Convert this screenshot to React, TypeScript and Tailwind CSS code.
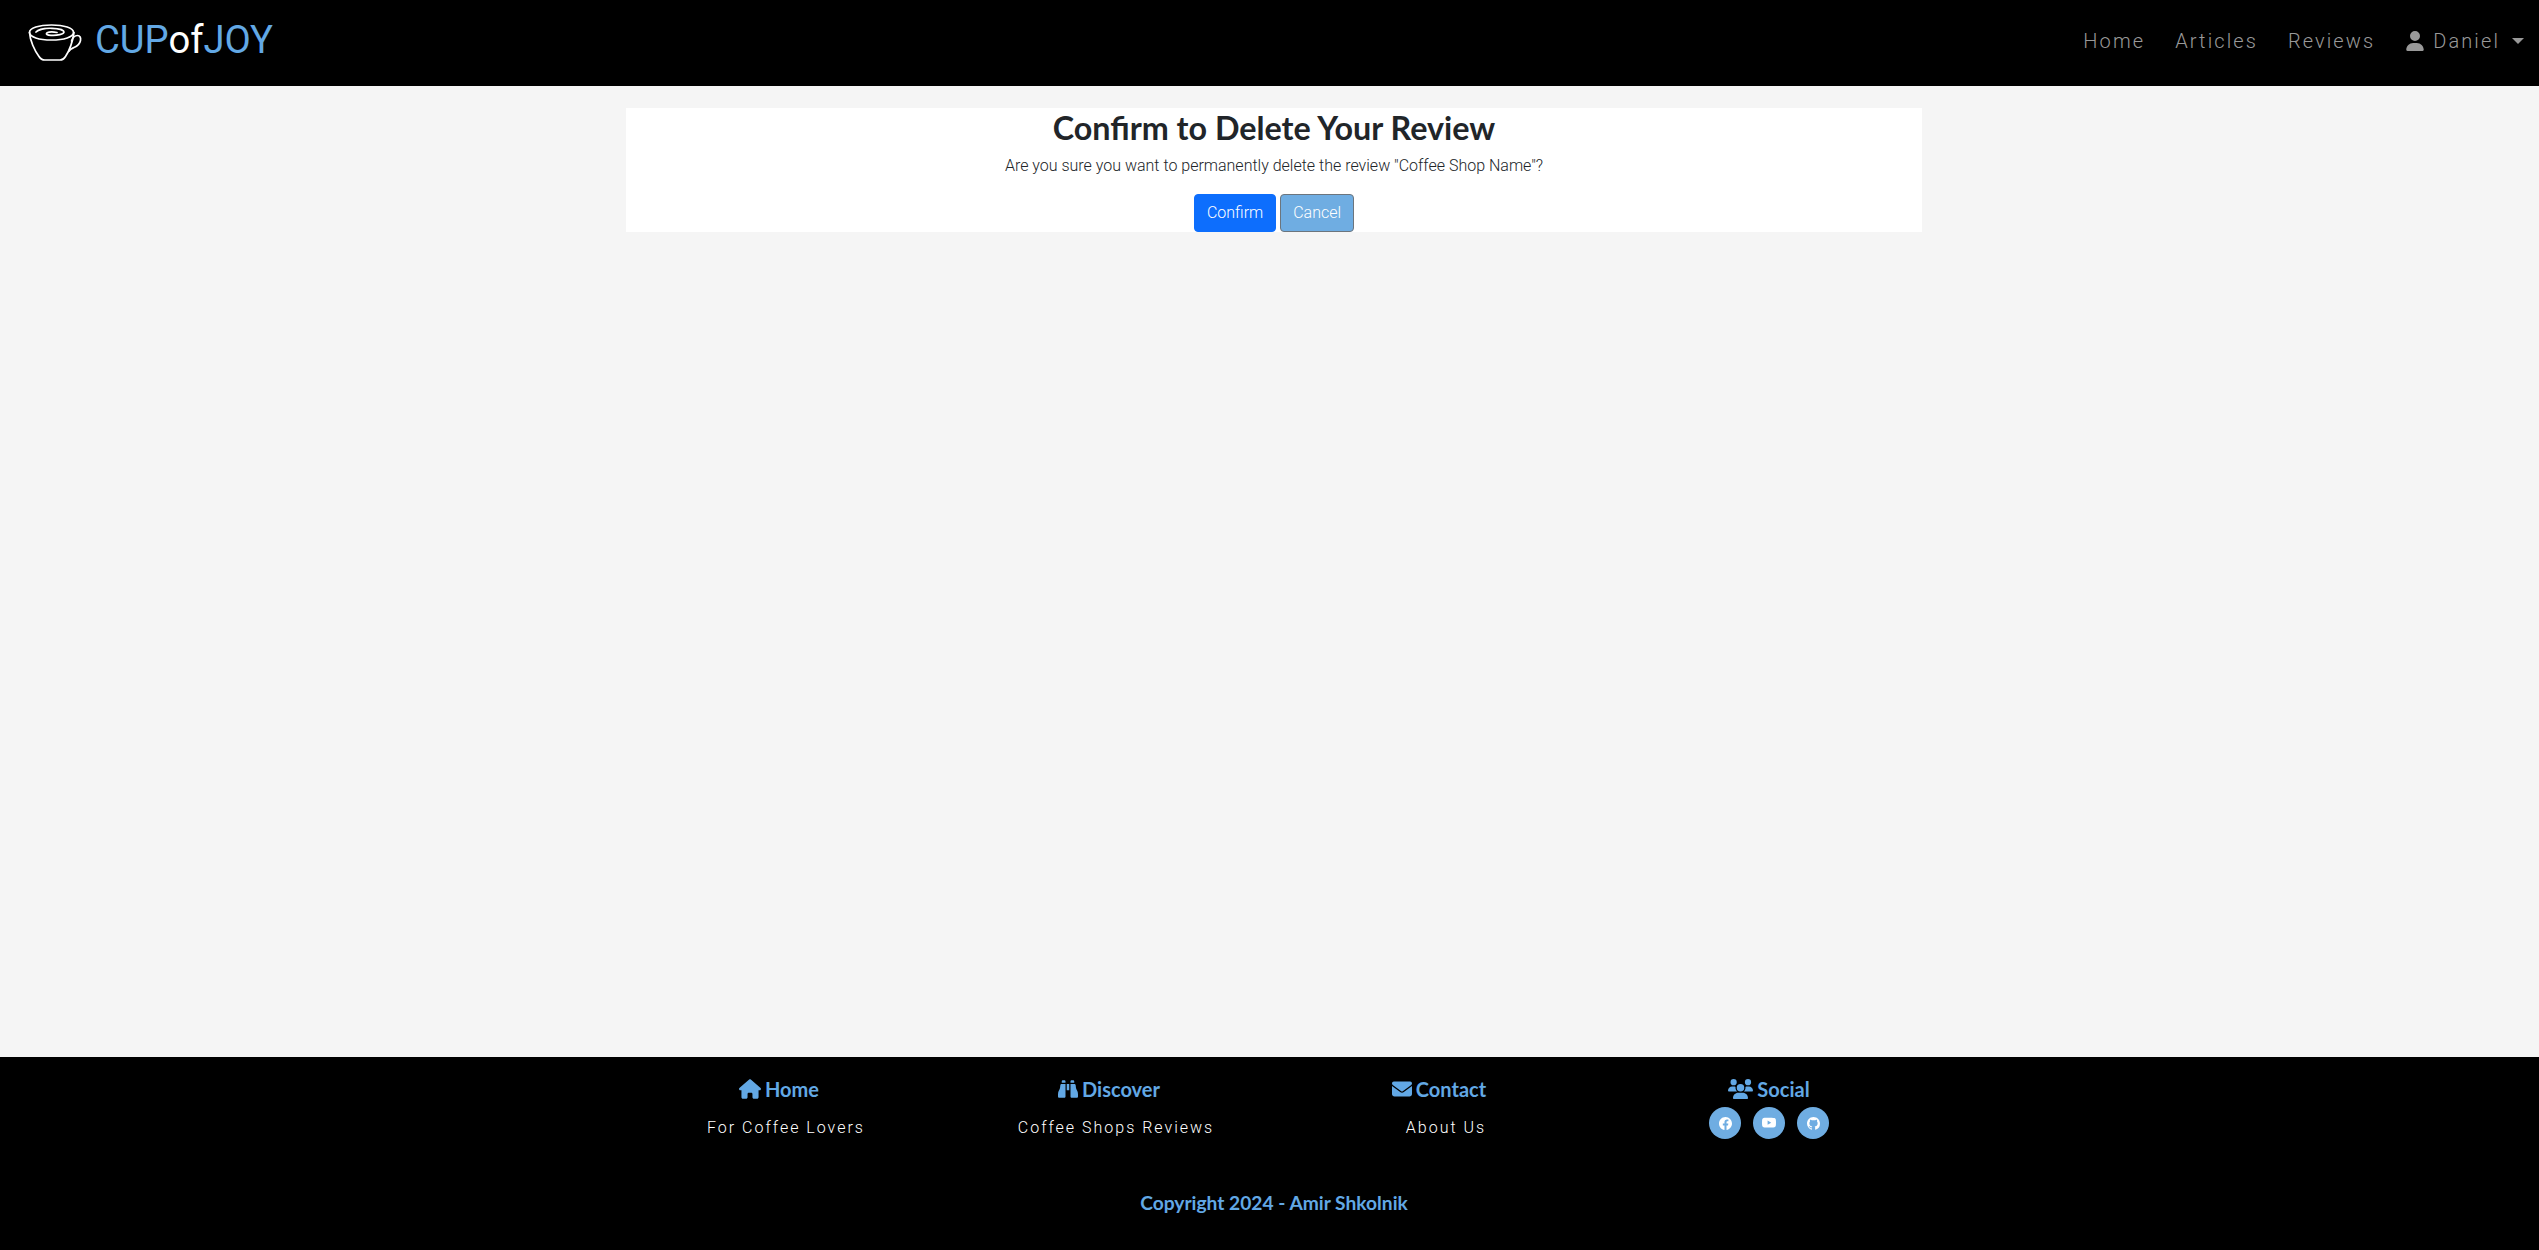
import { FaBinoculars, FaEnvelope, FaHouse, FaUser, FaUsers } from 'react-icons/fa6';
import { BsFacebook, BsGithub, BsYoutube } from 'react-icons/bs';

const roboto = 'font-["Roboto",sans-serif]';
const lato = 'font-["Lato",sans-serif]';

function CupLogo() {
  return (
    <svg viewBox="0 0 54 38" className="h-[38px] w-[54px]" fill="none" stroke="white" strokeWidth="1.7" strokeLinecap="round" strokeLinejoin="round">
      <path d="M1.500 8.500C1.500 4 11 1 23.500 1S45.500 4 45.500 8.500 36 16 23.500 16 1.500 13 1.500 8.500Z" />
      <path d="M1.500 8.500c.5 8 5 18 9.500 24 1.500 2.500 3.500 3.500 6 3.500h15c2.500 0 4-1 5.500-3.500 4-6 7-14 8.500-24" />
      <path d="M8 8c2-2.500 9-4 16-3.700 6 .2 12 1.500 12 3.700s-7 3.700-13 3.300c-4-.2-5.500-1.300-4-2.500 2-1 7-1 10-.3" />
      <path d="M43.500 17c1-3 3-5.500 6-5.500 2.500 0 3.500 2.300 3 5-.7 3.500-4 6-6.500 7-2 .8-4 1.500-5 3.500" />
    </svg>
  );
}

function NavLink({ label }: { label: string }) {
  return <a className="text-[20px] font-light tracking-[2.1px] text-[#999999]">{label}</a>;
}

function Navbar() {
  return (
    <nav className={`flex h-[86px] items-center justify-between bg-black pl-[28px] pr-[15px] ${roboto}`}>
      <div className="flex items-center">
        <CupLogo />
        <span className="mb-[6px] ml-[13px] text-[38.2px] font-normal leading-none text-[#62a8e5]">
          CUP<span className="text-white">of</span>JOY
        </span>
      </div>
      <div className="flex items-center gap-[30px] pb-[5px]">
        <NavLink label="Home" />
        <NavLink label="Articles" />
        <NavLink label="Reviews" />
        <div className="flex items-center gap-[8px] text-[#999999]">
          <FaUser className="h-[20px] w-[20px]" />
          <span className="text-[20px] font-light tracking-[2.1px]">Daniel</span>
          <span className="ml-[4px] h-0 w-0 border-x-[6px] border-t-[6px] border-x-transparent border-t-[#999999]" />
        </div>
      </div>
    </nav>
  );
}

function DeleteCard() {
  return (
    <main className="flex flex-1 justify-center bg-[#f5f5f5] pl-[9px] pt-[22px]">
      <section className="flex h-[124px] w-[1296px] flex-col items-center bg-white">
        <h2 className={`pt-[1px] text-[32.3px] font-bold leading-[38px] text-[#212529] ${lato}`}>Confirm to Delete Your Review</h2>
        <p className={`mt-[7px] text-[16px] font-light leading-[24px] text-[#212529] ${roboto}`}>
          Are you sure you want to permanently delete the review "Coffee Shop Name"?
        </p>
        <div className={`mt-[16px] flex gap-[4px] text-[16px] font-light text-white ${roboto}`}>
          <button className="h-[38px] rounded-[4px] border border-[#0d6efd] bg-[#0d6efd] px-[12px]">Confirm</button>
          <button className="h-[38px] rounded-[4px] border border-[#6c757d] bg-[#6fade2] px-[12px]">Cancel</button>
        </div>
      </section>
    </main>
  );
}

function FooterColumn({ icon, title, sub }: { icon: React.ReactNode; title: string; sub: string }) {
  return (
    <div className="flex w-[330px] flex-col items-center">
      <h5 className={`flex h-[24px] items-center gap-[4px] text-[20px] font-bold text-[#62a8e5] ${lato}`}>
        {icon}
        {title}
      </h5>
      <p className={`ml-[14px] mt-[15px] text-[16px] font-light tracking-[2px] text-white ${roboto}`}>{sub}</p>
    </div>
  );
}

function SocialButton({ children }: { children: React.ReactNode }) {
  return (
    <a className="flex h-[32px] w-[32px] items-center justify-center rounded-full bg-[#6fade2] text-white">{children}</a>
  );
}

function Footer() {
  return (
    <footer className="flex h-[193px] flex-col items-center bg-black pl-[9px] pt-[20px]">
      <div className="flex w-[1320px]">
        <FooterColumn icon={<FaHouse className="h-[20px] w-[22px]" />} title="Home" sub="For Coffee Lovers" />
        <FooterColumn icon={<FaBinoculars className="h-[20px] w-[20px]" />} title="Discover" sub="Coffee Shops Reviews" />
        <FooterColumn icon={<FaEnvelope className="h-[20px] w-[20px]" />} title="Contact" sub="About Us" />
        <div className="flex w-[330px] flex-col items-center">
          <h5 className={`flex h-[24px] items-center gap-[4px] text-[20px] font-bold text-[#62a8e5] ${lato}`}>
            <FaUsers className="h-[20px] w-[25px]" />
            Social
          </h5>
          <div className="mt-[6px] flex gap-[12px]">
            <SocialButton><BsFacebook className="h-[13px] w-[13px]" /></SocialButton>
            <SocialButton><BsYoutube className="h-[14px] w-[14px]" /></SocialButton>
            <SocialButton><BsGithub className="h-[13px] w-[13px]" /></SocialButton>
          </div>
        </div>
      </div>
      <p className={`mt-[49px] text-[19.2px] font-bold text-[#62a8e5] ${lato}`}>Copyright 2024 - Amir Shkolnik</p>
    </footer>
  );
}

export default function App() {
  return (
    <div className="flex h-[1250px] flex-col">
      <Navbar />
      <DeleteCard />
      <Footer />
    </div>
  );
}
